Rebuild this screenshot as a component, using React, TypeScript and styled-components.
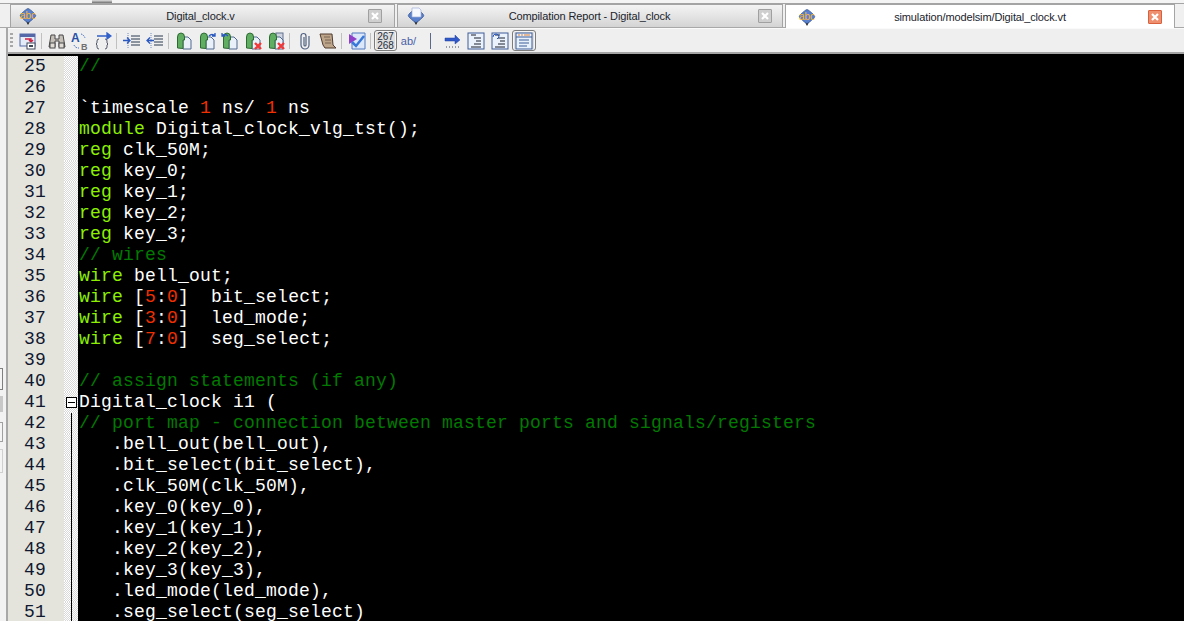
import React from "react";
import styled, { createGlobalStyle } from "styled-components";

const Global = createGlobalStyle`
  html, body { margin: 0; padding: 0; background: #f0f0f0; overflow: hidden; }
`;

const Frame = styled.div`
  width: 1184px; height: 621px; overflow: hidden;
  display: flex; flex-direction: column; background: #efefef;
  font-family: "Liberation Sans", Arial, sans-serif;
`;
const TopStrip = styled.div`
  height: 4px; flex: none; background: #f4f4f4; border-bottom: 1px solid #a4a4a4; box-sizing: border-box;
  padding-left: 92px;
`;
const StripMark = styled.div`
  width: 20px; height: 3px; background: linear-gradient(#e0e0e0, #707070);
`;
const TabBar = styled.div`
  height: 24px; flex: none; display: flex; gap: 2px; padding-left: 10px; background: #f0f0f0; box-sizing: border-box;
  border-bottom: 1px solid #a8a8a8;
`;
const Tab = styled.div<{ $active?: boolean; $w: number; $left: number; $right: number }>`
  width: ${p => p.$w}px; height: ${p => (p.$active ? 24 : 23)}px; flex: none; box-sizing: border-box;
  display: flex; align-items: center; padding: 0 ${p => p.$right}px 0 ${p => p.$left}px;
  border: 1px solid #a4a4a4; border-bottom: none;
  background: ${p => (p.$active ? "#ffffff" : "linear-gradient(#f4f4f4, #d4d4d4)")};
`;
const TabTitle = styled.span`
  flex: 1; text-align: center; font-size: 11px; color: #20242c; white-space: nowrap; padding-right: 4px;
  font-family: "Liberation Sans", Arial, sans-serif; letter-spacing: -0.12px;
`;
const Close = styled.div<{ $active?: boolean }>`
  width: 14px; height: 14px; flex: none; box-sizing: border-box; border-radius: 1px;
  display: flex; align-items: center; justify-content: center;
  border: 1px solid ${p => (p.$active ? "#d8603c" : "#a0a0a0")};
  background: ${p => (p.$active ? "#ee9070" : "#cfcfcf")};
`;
const Body = styled.div`
  flex: 1; display: flex; min-height: 0;
`;
const LeftRail = styled.div`
  width: 8px; flex: none; background: #f2f2f2; border-right: 2px solid #a8a8a8; box-sizing: border-box;
  display: flex; flex-direction: column; padding-top: 340px;
`;
const RailBox = styled.div<{ $h: number; $gap: number; $tone: string; $solid?: boolean }>`
  width: 3px; height: ${p => p.$h}px; margin-bottom: ${p => p.$gap}px; flex: none; box-sizing: border-box;
  border: 1px solid ${p => p.$tone}; border-left: none;
  background: ${p => (p.$solid ? p.$tone : "#f4f4f4")};
`;
const Main = styled.div`
  flex: 1; display: flex; flex-direction: column; min-width: 0;
`;
const Toolbar = styled.div`
  height: 26px; flex: none; box-sizing: border-box; display: flex; align-items: center;
  padding-left: 2px; background: #efefef; border-top: 1px solid #fafafa; border-bottom: 2px solid #a4a4a4;
`;
const Grip = styled.div`
  width: 3px; height: 16px; margin-right: 3px; flex: none;
  background: repeating-linear-gradient(#a8a8a8 0 2px, transparent 2px 4px);
`;
const ToolButton = styled.div<{ $active?: boolean; $w?: number }>`
  width: ${p => p.$w ?? 23}px; height: 21px; flex: none; box-sizing: border-box;
  display: flex; align-items: center; justify-content: center;
  border-radius: 3px;
  ${p => p.$active && "background:#dedede;border:1px solid #7c7c7c;box-shadow:inset 0 0 0 1px #f6f6f6;"}
`;
const Sep = styled.div<{ $wide?: boolean; $dark?: boolean }>`
  width: 1px; height: 16px; flex: none;
  margin: ${p => (p.$wide ? "0 10px" : "0 3px 0 2px")};
  background: ${p => (p.$dark ? "#5a6a88" : "#c0c0c0")};
`;
const CounterText = styled.span`
  font-family: "Liberation Sans", sans-serif; font-size: 10px; line-height: 9px; text-align: center; color: #283040;
`;
const AbText = styled.span`
  font-family: "Liberation Sans", sans-serif; font-size: 11px; color: #4a60a8;
`;
const Editor = styled.div`
  flex: 1; min-height: 0; background: #000; overflow: hidden; padding-top: 2px;
`;
const Row = styled.div`
  display: flex; height: 21px;
`;
const LineNo = styled.div`
  width: 56px; flex: none; box-sizing: border-box; background: #e4e4dc; color: #101830;
  font-family: "Liberation Mono", monospace; font-size: 18px; letter-spacing: .2px; line-height: 21px;
  padding-left: 16px;
`;
const Fold = styled.div`
  width: 14px; flex: none;
  background-color: #fff;
  background-image: conic-gradient(#d8d8d8 25%, #fff 0 50%, #d8d8d8 0 75%, #fff 0);
  background-size: 2px 2px;
  display: flex; justify-content: center; align-items: center;
`;
const FoldBox = styled.div`
  width: 11px; height: 11px; box-sizing: border-box; background: #fff; border: 1px solid #000;
  display: flex; align-items: center; justify-content: center;
  &::after { content: ""; width: 7px; height: 1px; background: #000; }
`;
const FoldLine = styled.div`
  width: 1px; height: 100%; background: #000;
`;
const Code = styled.pre`
  margin: 0; padding-left: 1px; color: #fff; white-space: pre;
  font-family: "Liberation Mono", monospace; font-size: 18px; letter-spacing: .2px; line-height: 21px;
`;
const Tok = styled.span<{ $k: string }>`
  color: ${p => ({ kw: "#8cf000", com: "#007a00", num: "#f03000", txt: "#ffffff" } as Record<string, string>)[p.$k]};
`;

const AbcIcon = ({ doc }: { doc?: boolean }) => (
  <svg width="18" height="18" viewBox="0 0 18 18">
    <path d="M7 14l2 4 2-4Z" fill="#111" />
    <path d="M9 1.5Q11 2 16 7q1.500 2 0 3-5 5-7 5.500Q7 15 2 10q-1.500-1 0-3Q7 2 9 1.500Z" fill="#5880cc" stroke="#34508c" strokeWidth=".7" />
    {doc ? <path d="M5 1h7l2 2v7H5z" fill="#f6f8ff" stroke="#a0b0d8" strokeWidth=".7" /> : (
      <text x="9" y="11.500" textAnchor="middle" fontSize="10" fontFamily="Liberation Sans" fill="#ffb830">abc</text>
    )}
  </svg>
);
const X = () => (
  <svg width="10" height="10" viewBox="0 0 10 10"><path d="M2 2l6 6M8 2l-6 6" stroke="#fff" strokeWidth="2.200" /></svg>
);
const Svg: React.FC<{ children: React.ReactNode }> = ({ children }) => (
  <svg width="18" height="18" viewBox="0 0 18 18" fill="none">{children}</svg>
);
const Window = () => <Svg>
  <rect x="1" y="2" width="15" height="12" fill="#e4ecf8" stroke="#5468a8" />
  <rect x="1" y="2" width="15" height="3" fill="#5468a8" />
  <path d="M6 7h6v3M12 10l-2-2M12 10l2-2" stroke="#d02040" strokeWidth="1.400" />
  <rect x="8" y="11" width="8" height="6" fill="#fff" stroke="#404858" />
  <rect x="10" y="13" width="4" height="2" fill="#404858" />
</Svg>;
const Binoc = () => <Svg>
  <path d="M3 3h4v4h4V3h4l2 12h-6V9H7v6H1Z" fill="#c4c0b8" stroke="#484848" />
  <rect x="2" y="11" width="5" height="5" fill="#e0dcd4" stroke="#484848" />
  <rect x="11" y="11" width="5" height="5" fill="#e0dcd4" stroke="#484848" />
</Svg>;
const Replace = () => <Svg>
  <text x="0" y="10" fontSize="12" fontWeight="bold" fontFamily="Liberation Sans" fill="#2850a8">A</text>
  <text x="10" y="17.500" fontSize="9" fontWeight="bold" fontFamily="Liberation Sans" fill="#707070">B</text>
  <path d="M10 2a6 6 0 0 1 4 4M3 13a5 5 0 0 0 5 3" stroke="#3060c0" strokeDasharray="1.500 1" />
</Svg>;
const Brace = () => <Svg>
  <path d="M3 4h10M13 1l4 3-4 3z" stroke="#3060c8" strokeWidth="1.300" fill="#3060c8" />
  <path d="M5 7Q3 7 3 9v2l-1 1 1 1v2q0 2 2 2M11 7q2 0 2 2v2l1 1-1 1v2q0 2-2 2" stroke="#505868" />
</Svg>;
const Indent = ({ out }: { out?: boolean }) => <Svg>
  <path d="M8 4h9M8 7h9M8 10h9M8 13h9" stroke="#283850" />
  <path d="M5 1v16" stroke="#708cc0" strokeDasharray="1 1" />
  {out ? <path d="M8 8.500H1M4 5.500l-3 3 3 3" stroke="#2858c0" strokeWidth="1.300" /> : <path d="M0 8.500h7M4 5.500l3 3-3 3" stroke="#2858c0" strokeWidth="1.300" />}
</Svg>;
const Mark = ({ v }: { v?: "f" | "b" | "x" | "xx" }) => <Svg>
  {v === "xx" && <rect x="9" y="1" width="7" height="12" fill="#d0d4e0" stroke="#607090" />}
  <path d="M8 5h5l3 3v9H8z" fill="#eaf0fa" stroke="#506890" />
  <path d="M2.500 16V5q0-4 3.500-4t3.500 4v3H8v8.500z" fill="#5fae62" stroke="#2f6a34" />
  {v === "f" && <path d="M11 4q3-3 6 0M17 1v3h-3" stroke="#2858c0" strokeWidth="1.300" />}
  {v === "b" && <path d="M7 4Q4 1 1 4M1 1v3h3" stroke="#2858c0" strokeWidth="1.300" />}
  {(v === "x" || v === "xx") && <path d="M11 11l6 6M17 11l-6 6" stroke="#f03838" strokeWidth="2.400" />}
</Svg>;
const Clip = () => <Svg>
  <path d="M13 4v9a4 4 0 0 1-8 0V4a2.500 2.500 0 0 1 5 0v9a1 1 0 0 1-2 0V5" stroke="#506080" strokeWidth="1.200" />
</Svg>;
const Scroll = () => <Svg>
  <path d="M1 2h12l1 11 3 3H6l-2-3z" fill="#bda58a" stroke="#503c30" />
  <path d="M5 5h6M6 8h6M6 11h6" stroke="#7a6454" />
</Svg>;
const Check = () => <Svg>
  <path d="M4 1h13v16H4z" fill="#dce8fa" stroke="#5078c0" />
  <path d="M1 2l8 5-8 5z" fill="#9040c8" />
  <path d="M4 10l4 4 8-10" stroke="#3878d8" strokeWidth="2.500" />
</Svg>;
const ArrowDots = () => <Svg>
  <path d="M1 6h10v-3l5 5-5 4V9H1z" fill="#3058c8" stroke="#2040a0" strokeWidth=".5" />
  <path d="M2 15h14" stroke="#404858" strokeDasharray="1 2" />
</Svg>;
const Page = ({ v }: { v: "a" | "b" | "c" }) => <Svg>
  <rect x="1" y="1" width="16" height="16" fill={v === "c" ? "#e8f0fc" : "#ecf2fc"} stroke="#3c5c98" />
  {v === "c" && <path d="M1 5h16" stroke="#3c5c98" />}
  {v === "c" && <path d="M3 3h2M6 3h2M9 3h6" stroke="#e08030" />}
  {v === "c" ? <path d="M4 8h10M4 11h10M4 14h8" stroke="#3c5c98" /> : <path d="M4 3h5M7 6h7M9 9h5M7 12h7M4 15h10" stroke="#1c2030" />}
  {v === "b" && <path d="M2 5q0-3 3-3t3 3l-2 2" stroke="#2858c0" fill="none" />}
</Svg>;

const lines = [
  "//", "", "`timescale 1 ns/ 1 ns", "module Digital_clock_vlg_tst();", "reg clk_50M;", "reg key_0;", "reg key_1;",
  "reg key_2;", "reg key_3;", "// wires", "wire bell_out;", "wire [5:0]  bit_select;", "wire [3:0]  led_mode;",
  "wire [7:0]  seg_select;", "", "// assign statements (if any)", "Digital_clock i1 (",
  "// port map - connection between master ports and signals/registers",
  "   .bell_out(bell_out),", "   .bit_select(bit_select),", "   .clk_50M(clk_50M),", "   .key_0(key_0),",
  "   .key_1(key_1),", "   .key_2(key_2),", "   .key_3(key_3),", "   .led_mode(led_mode),", "   .seg_select(seg_select)",
];

function tokens(line: string): { k: string; t: string }[] {
  if (line.startsWith("//")) return [{ k: "com", t: line }];
  const out: { k: string; t: string }[] = [];
  const re = /^(module|reg|wire)\b|\[(\d):(\d)\]|(?<=`timescale | ns\/ )1/g;
  let last = 0;
  for (const m of line.matchAll(re)) {
    if (m.index > last) out.push({ k: "txt", t: line.slice(last, m.index) });
    if (m[2]) {
      out.push({ k: "txt", t: "[" }, { k: "num", t: m[2] }, { k: "txt", t: ":" }, { k: "num", t: m[3] }, { k: "txt", t: "]" });
    } else out.push({ k: m[1] ? "kw" : "num", t: m[0] });
    last = m.index + m[0].length;
  }
  if (last < line.length) out.push({ k: "txt", t: line.slice(last) });
  return out;
}

export default function App() {
  return (
    <Frame>
      <Global />
      <TopStrip><StripMark /></TopStrip>
      <TabBar>
        <Tab $w={385} $left={8} $right={12}><AbcIcon /><TabTitle>Digital_clock.v</TabTitle><Close><X /></Close></Tab>
        <Tab $w={386} $left={9} $right={10}><AbcIcon doc /><TabTitle>Compilation Report - Digital_clock</TabTitle><Close><X /></Close></Tab>
        <Tab $w={390} $left={12} $right={12} $active><AbcIcon /><TabTitle>simulation/modelsim/Digital_clock.vt</TabTitle><Close $active><X /></Close></Tab>
      </TabBar>
      <Body>
        <LeftRail>
          <RailBox $h={22} $gap={6} $tone="#808080" />
          <RailBox $h={16} $gap={10} $tone="#c8c8c8" $solid />
          <RailBox $h={20} $gap={7} $tone="#a0a0a0" />
          <RailBox $h={24} $gap={0} $tone="#d0d0d0" />
        </LeftRail>
        <Main>
          <Toolbar>
            <Grip />
            <ToolButton><Window /></ToolButton>
            <Sep />
            <ToolButton><Binoc /></ToolButton>
            <ToolButton><Replace /></ToolButton>
            <ToolButton><Brace /></ToolButton>
            <Sep />
            <ToolButton><Indent /></ToolButton>
            <ToolButton><Indent out /></ToolButton>
            <Sep />
            <ToolButton><Mark /></ToolButton>
            <ToolButton><Mark v="f" /></ToolButton>
            <ToolButton><Mark v="b" /></ToolButton>
            <ToolButton><Mark v="x" /></ToolButton>
            <ToolButton><Mark v="xx" /></ToolButton>
            <Sep />
            <ToolButton><Clip /></ToolButton>
            <ToolButton><Scroll /></ToolButton>
            <Sep />
            <ToolButton><Check /></ToolButton>
            <Sep />
            <ToolButton $active><CounterText>267<br />268</CounterText></ToolButton>
            <ToolButton><AbText>ab/</AbText></ToolButton>
            <Sep $wide $dark />
            <ToolButton><ArrowDots /></ToolButton>
            <ToolButton $w={24}><Page v="a" /></ToolButton>
            <ToolButton $w={24}><Page v="b" /></ToolButton>
            <ToolButton $w={24} $active><Page v="c" /></ToolButton>
          </Toolbar>
          <Editor>
            {lines.map((l, i) => {
              const n = i + 25;
              return (
                <Row key={n}>
                  <LineNo>{n}</LineNo>
                  <Fold>{n === 41 ? <FoldBox /> : n > 41 ? <FoldLine /> : null}</Fold>
                  <Code>{tokens(l).map((t, j) => <Tok key={j} $k={t.k}>{t.t}</Tok>)}</Code>
                </Row>
              );
            })}
          </Editor>
        </Main>
      </Body>
    </Frame>
  );
}
